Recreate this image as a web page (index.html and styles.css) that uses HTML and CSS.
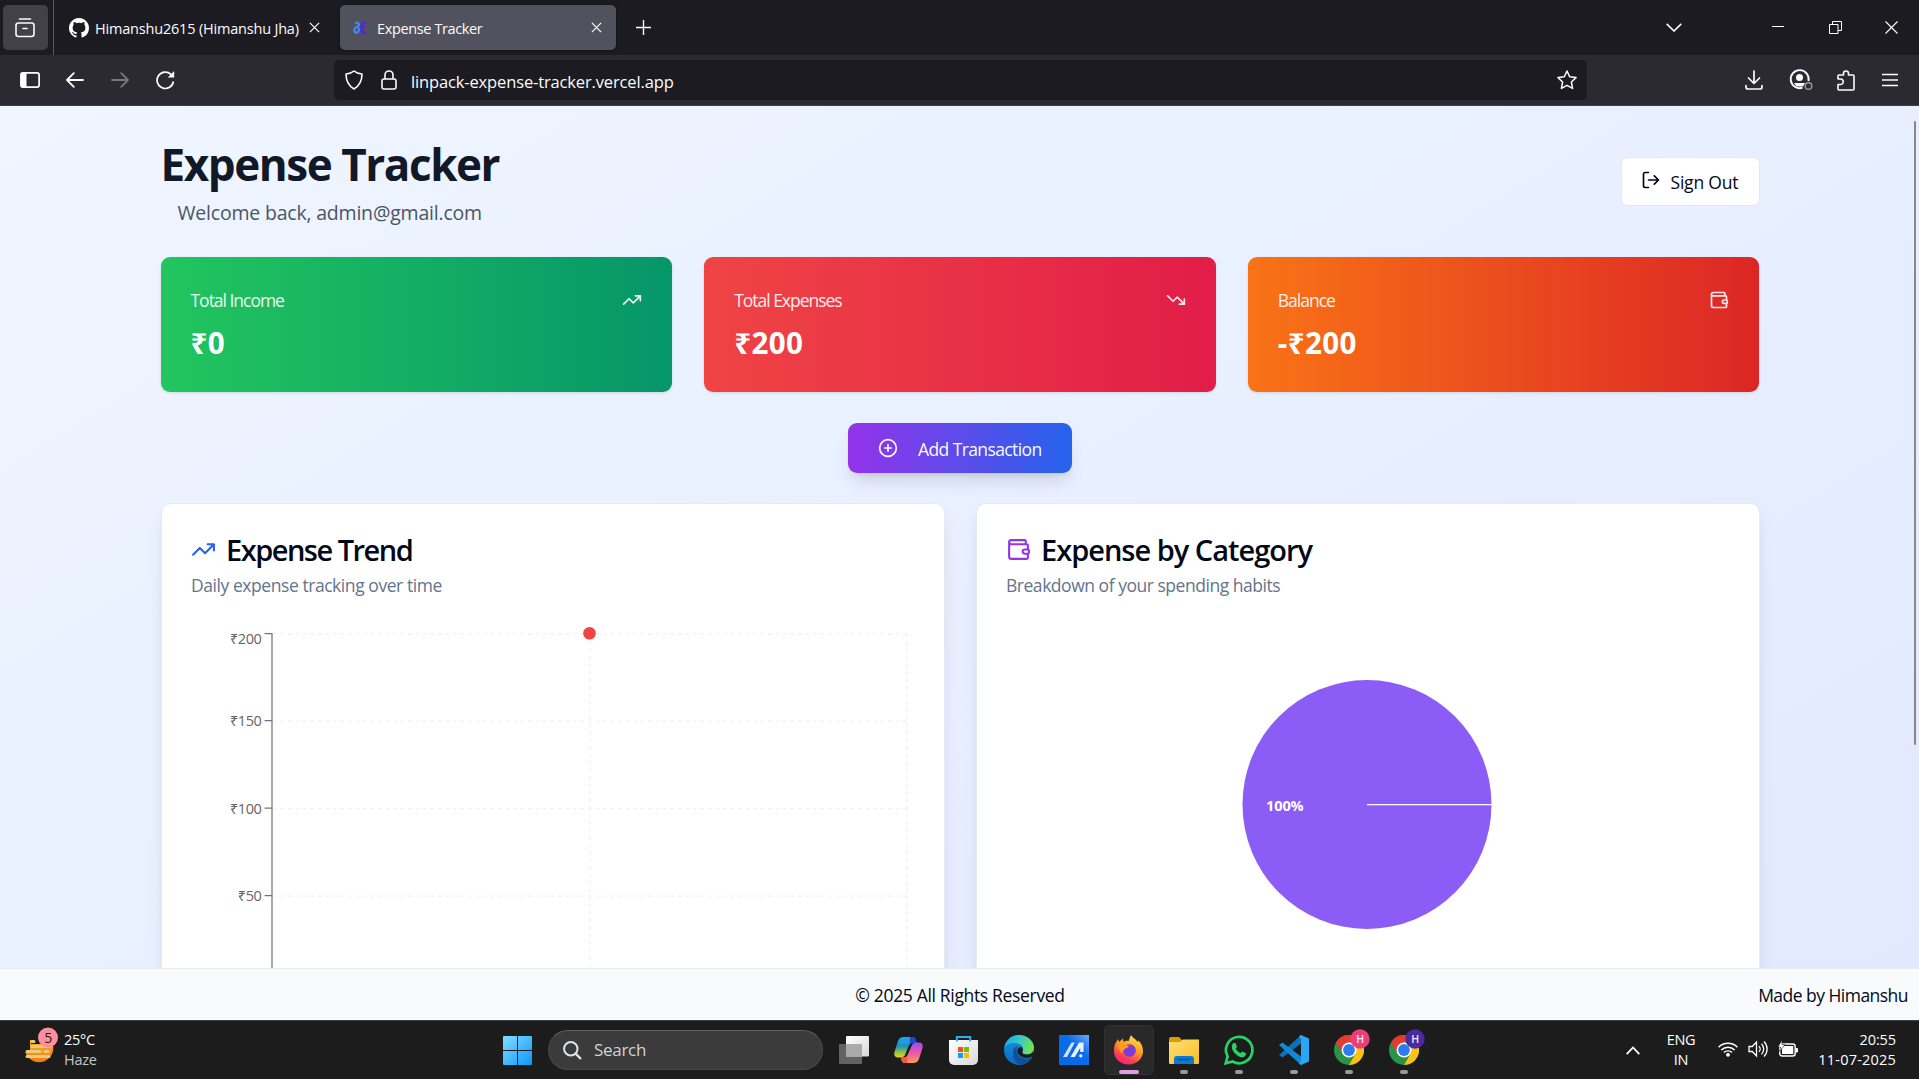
FILE: index.html
```html
<!DOCTYPE html>
<html lang="en">
<head>
<meta charset="utf-8">
<title>Expense Tracker</title>
<link rel="stylesheet" href="styles.css">
</head>
<body>
<svg class="defs" aria-hidden="true">
  <symbol id="close" viewBox="0 0 10 10"><path d="M.8.8l8.4 8.4M9.2.8L.8 9.2" fill="none" stroke="currentColor" stroke-width="1.1"/></symbol>
  <symbol id="trend-up" viewBox="0 0 24 24"><path d="M22 7l-8.5 8.5-5-5L2 17M16 7h6v6"/></symbol>
  <symbol id="trend-down" viewBox="0 0 24 24"><path d="M22 17l-8.5-8.5-5 5L2 7M16 17h6v-6"/></symbol>
  <symbol id="wallet" viewBox="0 0 24 24"><path d="M19 7V4a1 1 0 0 0-1-1H5a2 2 0 0 0 0 4h15a1 1 0 0 1 1 1v4h-3a2 2 0 0 0 0 4h3a1 1 0 0 0 1-1v-2a1 1 0 0 0-1-1M3 5v14a2 2 0 0 0 2 2h15a1 1 0 0 0 1-1v-4"/></symbol>
  <symbol id="chrome" viewBox="0 0 30 30">
    <circle cx="15" cy="15" r="15" fill="#2b9347"/>
    <path d="M15 7.5H28A15 15 0 0 0 2 7.5L8.500 18.750Z" fill="#e33b2e"/>
    <path d="M15 7.500H28A15 15 0 0 1 15 30L21.500 18.750Z" fill="#fbc116"/>
    <circle cx="15" cy="15" r="7.500" fill="#fff"/><circle cx="15" cy="15" r="5.900" fill="#2a7cf0"/>
  </symbol>
  <linearGradient id="g-win" x2="1" y2="1"><stop stop-color="#83ddff"/><stop offset="1" stop-color="#0c96fb"/></linearGradient>
  <linearGradient id="g-light" x2="1" y2="1"><stop stop-color="#fff"/><stop offset="1" stop-color="#d8d8d8"/></linearGradient>
  <linearGradient id="g-cop1" x2="0" y2="1"><stop stop-color="#1ba9f5"/><stop offset=".45" stop-color="#1f8fc0"/><stop offset=".75" stop-color="#8cc63f"/><stop offset="1" stop-color="#f8cb1c"/></linearGradient>
  <linearGradient id="g-cop2" x2="0" y2="1"><stop stop-color="#9a4df0"/><stop offset=".5" stop-color="#ea56a8"/><stop offset="1" stop-color="#ff9e50"/></linearGradient>
  <linearGradient id="g-edge" x2="1" y2=".3"><stop stop-color="#1b9fde"/><stop offset=".5" stop-color="#35c4cf"/><stop offset="1" stop-color="#6be25b"/></linearGradient>
  <linearGradient id="g-edge2" x2="0" y2="1"><stop stop-color="#1796df"/><stop offset="1" stop-color="#0b66c4"/></linearGradient>
  <linearGradient id="g-m" x1="0" y1="1" x2="1" y2="0"><stop stop-color="#0568e8"/><stop offset=".6" stop-color="#0a6cea"/><stop offset="1" stop-color="#6aa9fb"/></linearGradient>
  <linearGradient id="g-fox" x1=".8" y1="0" x2=".3" y2="1"><stop stop-color="#ffe94a"/><stop offset=".45" stop-color="#ff9a1f"/><stop offset=".8" stop-color="#fb3a55"/><stop offset="1" stop-color="#f5207c"/></linearGradient>
  <linearGradient id="g-folder" x2="1" y2="1"><stop stop-color="#ffe07a"/><stop offset="1" stop-color="#fcbc1d"/></linearGradient>
  <linearGradient id="g-sun" x2="0" y2="1"><stop stop-color="#fbc02d"/><stop offset="1" stop-color="#f07a13"/></linearGradient>
</svg>

<div class="tabstrip">
  <div class="view-button"><svg width="20" height="20" viewBox="0 0 20 20" fill="none" stroke="#fbfbfe" stroke-width="1.600" stroke-linecap="round"><path d="M4.500 1h11"/><rect x="1" y="5" width="18" height="13.500" rx="2.500"/><path d="M8 10.500h4"/></svg></div>
  <div class="tab tab-plain">
    <svg width="20" height="20" viewBox="0 0 16 16" fill="#fff"><path d="M8 0C3.580 0 0 3.580 0 8c0 3.540 2.290 6.530 5.470 7.590.4.070.55-.17.55-.38 0-.19-.01-.82-.01-1.490-2.010.37-2.530-.49-2.690-.94-.09-.23-.48-.94-.82-1.130-.28-.15-.68-.52-.01-.53.63-.01 1.080.58 1.230.82.72 1.210 1.870.87 2.330.66.07-.52.28-.87.51-1.070-1.780-.2-3.640-.89-3.640-3.950 0-.87.31-1.590.82-2.150-.08-.2-.36-1.020.08-2.120 0 0 .67-.21 2.200.82.64-.18 1.320-.27 2-.27s1.360.09 2 .27c1.530-1.040 2.200-.82 2.200-.82.44 1.100.16 1.920.08 2.120.51.56.82 1.270.82 2.150 0 3.070-1.870 3.750-3.650 3.950.29.25.54.73.54 1.480 0 1.070-.01 1.930-.01 2.200 0 .21.15.46.55.38A8.010 8.010 0 0 0 16 8c0-4.420-3.580-8-8-8z"/></svg>
    <span class="tab-title github-title">Himanshu2615 (Himanshu Jha)</span>
    <svg class="tab-close" width="11" height="11"><use href="#close"/></svg>
  </div>
  <div class="tab tab-active">
    <svg width="14" height="14" viewBox="0 0 14 14" fill="none" stroke-width="2.200"><path d="M2 2.200c3.500-1.700 5 1.500 2.800 4M5.500 6C1.500 5.500 0 10 2.500 11.500c2.500 1 3.800-2.500 3.800-4.500" stroke="#3d8bf2"/><path d="M12.800 1.500C9.500 1 8.800 4 8.500 7s1 5 4 5.500M8 7l4-1.500" stroke="#5420ee"/></svg>
    <span class="tab-title active-title">Expense Tracker</span>
    <svg class="tab-close" width="11" height="11"><use href="#close"/></svg>
  </div>
  <svg class="new-tab" width="15" height="15" viewBox="0 0 15 15" stroke="#fbfbfe" stroke-width="1.400"><path d="M7.500 0v15M0 7.500h15"/></svg>
  <div class="window-buttons">
    <svg width="16" height="9" viewBox="0 0 16 9" fill="none" stroke="#fbfbfe" stroke-width="1.600"><path d="M.7.900L8 8 15.300.900"/></svg>
    <svg width="12" height="13" viewBox="0 0 12 13" stroke="#fff"><path d="M0 5.500h12"/></svg>
    <svg width="13" height="13" viewBox="0 0 13 13" fill="none" stroke="#fff"><path d="M.5 3.500h8.500v9H.5zM3.500 3.500v-3h9V9.500H9"/></svg>
    <svg width="13" height="13" viewBox="0 0 13 13" stroke="#fff" stroke-width="1.100"><path d="M.5.5l12 12M12.500.5l-12 12"/></svg>
  </div>
</div>

<div class="toolbar">
  <div class="nav-icons">
    <svg width="20" height="16" viewBox="0 0 20 16"><rect x=".9" y=".9" width="18.200" height="14.200" rx="2" fill="none" stroke="#fff" stroke-width="1.700"/><path d="M1 1h5.500v14H1z" fill="#fff"/></svg>
    <svg width="18" height="16" viewBox="0 0 18 16" fill="none" stroke="#fbfbfe" stroke-width="1.800" stroke-linecap="round" stroke-linejoin="round"><path d="M17 8H1M7.800 1.200L1 8l6.800 6.800"/></svg>
    <svg width="18" height="16" viewBox="0 0 18 16" fill="none" stroke="#77767e" stroke-width="1.800" stroke-linecap="round" stroke-linejoin="round"><path d="M1 8h16M10.200 1.200L17 8l-6.800 6.800"/></svg>
    <svg width="19" height="20" viewBox="0 0 19 20" fill="none" stroke="#fbfbfe" stroke-width="1.700"><path d="M17.400 11.500A8.200 8.200 0 1 1 14.800 4.200L16.500 6"/><path d="M18.200 1v6.500h-6.500z" fill="#fbfbfe" stroke="none"/></svg>
  </div>
  <div class="urlbar">
    <svg width="18" height="20" viewBox="0 0 18 20" fill="none" stroke="#fbfbfe" stroke-width="1.600" stroke-linejoin="round"><path d="M9 1c2 1.800 4.800 2.700 8 3 0 7-2.600 11.800-8 15C3.600 15.800 1 11 1 4c3.200-.3 6-1.200 8-3z"/></svg>
    <svg width="16" height="20" viewBox="0 0 16 20" fill="none" stroke="#fbfbfe" stroke-width="1.600"><rect x="1" y="9" width="14" height="10" rx="2"/><path d="M4 9V5a4 4 0 0 1 8 0v4"/></svg>
    <span class="url">linpack-expense-tracker.vercel.app</span>
    <svg width="20" height="20" viewBox="0 0 20 20" fill="none" stroke="#fbfbfe" stroke-width="1.500" stroke-linejoin="round"><path d="M10 1l2.700 5.800 6.300.8-4.600 4.400 1.200 6.400L10 15.300l-5.600 3.100L5.600 12 1 7.600l6.300-.8z"/></svg>
  </div>
  <div class="tool-icons">
    <svg width="18" height="20" viewBox="0 0 18 20" fill="none" stroke="#fbfbfe" stroke-width="1.700" stroke-linecap="round" stroke-linejoin="round"><path d="M9 1v12M3.500 8L9 13.500 14.500 8M1 15.500V17a2 2 0 0 0 2 2h12a2 2 0 0 0 2-2v-1.500"/></svg>
    <svg width="24" height="22" viewBox="0 0 24 22"><path d="M13.500 18.700A9 9 0 1 1 19.500 12" fill="none" stroke="#fbfbfe" stroke-width="1.900"/><circle cx="10.500" cy="8.500" r="3.500" fill="#fbfbfe"/><path d="M5 14h11l-2 3.500H7.500z" fill="#fbfbfe"/><circle cx="19.500" cy="17" r="3.300" fill="none" stroke="#96959b" stroke-width="1.500"/></svg>
    <svg width="18" height="21" viewBox="0 0 18 21" fill="none" stroke="#fbfbfe" stroke-width="1.600" stroke-linejoin="round"><path d="M1 9V6a1 1 0 0 1 1-1h4.500V3.500a2.500 2.500 0 0 1 5 0V5H16a1 1 0 0 1 1 1v13a1 1 0 0 1-1 1H2a1 1 0 0 1-1-1v-4.500h2.500a2.500 2.500 0 0 0 0-5.500z"/></svg>
    <svg width="16" height="14" viewBox="0 0 16 14" stroke="#fbfbfe" stroke-width="1.500"><path d="M0 1.500h16M0 7h16M0 12.500h16"/></svg>
  </div>
</div>

<main class="viewport">
  <div class="container">
    <header class="page-header">
      <div>
        <h1 class="page-title">Expense Tracker</h1>
        <p class="welcome">Welcome back, admin@gmail.com</p>
      </div>
      <button class="sign-out">
        <svg class="lucide" width="20" height="20" viewBox="0 0 24 24"><path d="M9 21H5a2 2 0 0 1-2-2V5a2 2 0 0 1 2-2h4M16 17l5-5-5-5M21 12H9"/></svg>
        <span>Sign Out</span>
      </button>
    </header>

    <section class="stats">
      <article class="stat stat-income">
        <div class="stat-head"><span class="stat-label">Total Income</span><svg class="lucide" width="20" height="20"><use href="#trend-up"/></svg></div>
        <div class="stat-value">₹0</div>
      </article>
      <article class="stat stat-expense">
        <div class="stat-head"><span class="stat-label">Total Expenses</span><svg class="lucide" width="20" height="20"><use href="#trend-down"/></svg></div>
        <div class="stat-value">₹200</div>
      </article>
      <article class="stat stat-balance">
        <div class="stat-head"><span class="stat-label">Balance</span><svg class="lucide" width="20" height="20"><use href="#wallet"/></svg></div>
        <div class="stat-value">-₹200</div>
      </article>
    </section>

    <button class="add-button">
      <svg class="lucide" width="20" height="20" viewBox="0 0 24 24"><circle cx="12" cy="12" r="10"/><path d="M8 12h8M12 8v8"/></svg>
      <span>Add Transaction</span>
    </button>

    <section class="charts">
      <article class="panel">
        <h2 class="panel-title"><svg class="lucide blue" width="25" height="25"><use href="#trend-up"/></svg><span class="trend-name">Expense Trend</span></h2>
        <p class="panel-note trend-note">Daily expense tracking over time</p>
        <svg class="chart" width="722" height="400" viewBox="0 0 722 400">
          <g stroke="#f1f1f1" stroke-width="1.250" stroke-dasharray="3.750 3.750">
            <path d="M82 18.500h634M82 106h634M82 193.500h634M82 281h634M399 18.500v350M716 18.500v350"/>
          </g>
          <path d="M81 18v351M73.500 18.500h8M73.500 105.500h8M73.500 193h8M73.500 280.500h8" fill="none" stroke="#74767c" stroke-width="1.250"/>
          <g class="tick" text-anchor="end">
            <text x="70.500" y="29">₹200</text><text x="70.500" y="111">₹150</text><text x="70.500" y="198.500">₹100</text><text x="70.500" y="286">₹50</text>
          </g>
          <circle cx="398.500" cy="18.300" r="6.300" fill="#ef4444"/>
        </svg>
      </article>
      <article class="panel">
        <h2 class="panel-title"><svg class="lucide purple" width="25" height="25"><use href="#wallet"/></svg><span class="category-name">Expense by Category</span></h2>
        <p class="panel-note category-note">Breakdown of your spending habits</p>
        <svg class="chart" width="722" height="400" viewBox="0 0 722 400">
          <circle cx="361" cy="189.500" r="124.500" fill="#8b5cf6"/>
          <path d="M361 189.500h125" stroke="#fff" stroke-width="1.250"/>
          <text class="slice-label" x="260" y="196">100%</text>
        </svg>
      </article>
    </section>
  </div>
  <div class="scroll-thumb"></div>
</main>

<footer class="footer">
  <span></span>
  <span class="copyright">© 2025 All Rights Reserved</span>
  <span class="credit">Made by Himanshu</span>
</footer>

<div class="taskbar">
  <div class="weather">
    <svg width="36" height="38" viewBox="0 0 36 38"><circle cx="15" cy="21" r="14.300" fill="url(#g-sun)"/><path d="M0 0h17v13H0zM0 13h6v12H0z" fill="#1c1c1c"/><path d="M7 17h10v-5H7z" fill="#1c1c1c"/><path d="M8 14.500h2M8 19.500h18M3 24.500h13M21 24.500h3M3 29.500h22" stroke="#e8ca7c" stroke-width="3" stroke-linecap="round"/><circle cx="24" cy="10.500" r="10" fill="#ff8f9d"/><text class="weather-count" x="24" y="16" text-anchor="middle">5</text></svg>
    <div class="weather-text"><span>25°C</span><span class="dim">Haze</span></div>
  </div>
  <div class="apps">
    <div class="app"><svg width="29" height="29" viewBox="0 0 29 29" fill="url(#g-win)"><path d="M1 0h13v14H0V1a1 1 0 0 1 1-1zM15 0h13a1 1 0 0 1 1 1v13H15zM0 15h14v14H1a1 1 0 0 1-1-1zM15 15h14v13a1 1 0 0 1-1 1H15z"/></svg></div>
    <div class="search"><svg width="19" height="19" viewBox="0 0 19 19" fill="none" stroke="#dfe3e8" stroke-width="2"><circle cx="7.800" cy="7.800" r="6.700"/><path d="M12.600 12.600l5.400 5.400" stroke-width="2.400"/></svg><span>Search</span></div>
    <div class="app"><svg width="30" height="28" viewBox="0 0 30 28"><rect y="8" width="23" height="20" rx="1" fill="#626262"/><rect x="7" width="23" height="20.500" rx="1" fill="url(#g-light)"/><path d="M7 8h16v12.500H7z" fill="#aaa"/></svg></div>
    <div class="app"><svg width="29" height="26" viewBox="0 0 29 26"><path d="M10 0h8c2 0 3 1 3.500 3l.8 3h-4c-2 0-3 1-3.500 2.500L11 18c-.7 1.500-2 2.500-4 2.500H4C1 20.500-.5 18 .5 15L4 4c.8-2.500 3-4 6-4z" fill="url(#g-cop1)"/><path d="M16 0h3c1.500 0 2.500 1 3 3l.8 3h-4c-1.800 0-2.500.7-3 2z" fill="#1749d6"/><path d="M19 26h-8c-2 0-3-1-3.500-3l-.7-2.500H10c2 0 3-1 3.500-2.500L18 8c.7-1.500 2-2.500 4-2.500h3c3 0 4.500 2.500 3.500 5.500L25 22c-.8 2.500-3 4-6 4z" fill="url(#g-cop2)"/><path d="M13 26h-2c-2 0-3-1-3.500-3l-.7-2.500H10c2 0 3-1 3.500-2.500z" fill="#f25a3c"/></svg></div>
    <div class="app"><svg width="29" height="29" viewBox="0 0 29 29"><path d="M7.800 6V1h13.400v5" fill="none" stroke="#25b0ee" stroke-width="2"/><path d="M0 4h29v20a5 5 0 0 1-5 5H5a5 5 0 0 1-5-5z" fill="url(#g-light)"/><path d="M9 11h5v5H9z" fill="#f1511b"/><path d="M15 11h5v5h-5z" fill="#80bb03"/><path d="M9 17h5v5H9z" fill="#04a5f0"/><path d="M15 17h5v5h-5z" fill="#fdba05"/><path d="M7 4h1.800v1.500H7zM20.200 4H22v1.500h-1.800z" fill="#25b0ee"/></svg></div>
    <div class="app"><svg width="30" height="30" viewBox="0 0 30 30"><circle cx="15" cy="15" r="15" fill="url(#g-edge2)"/><path d="M0 14C1 6 7 0 15 0s15 6 15 12.500c0 4.500-3 7-7 7-3.500 0-5.300-1.300-4.500-3 2-4-1.500-8.500-7.500-8.500C5 8 1 10 0 14z" fill="url(#g-edge)"/><path d="M9 17c0-3 2-5.500 5-6-3 3-1.500 11 6 12.500 3 .6 6 0 8-1.200C25.500 27 21 30 16 30 12 28 9 23 9 17z" fill="#114f96"/><path d="M18.500 16.500c-.8 1.700 1 3 4.500 3 3 0 5.500-1.400 6.500-4L30 24l-2.200-2.200c-7 3-15-1-14.500-6.500.2-2 2-3.500 3.500-3.300 2 .4 2.500 2.500 1.700 4.500z" fill="#1c1c1c"/></svg></div>
    <div class="app"><svg width="30" height="30" viewBox="0 0 30 30"><path d="M0 0h30v30H0z" fill="url(#g-m)"/><path d="M4 22L12.500 7.500h3.300L8 22z" fill="#cfe2ff"/><path d="M11.500 22L20 7.500h4.500V17h-3.300v-4l-5.400 9z" fill="#e9f2ff"/><circle cx="21.800" cy="20.800" r="1.600" fill="#fff"/></svg></div>
    <div class="app app-current"><svg width="29" height="30" viewBox="0 0 29 30"><path d="M1 9l3-5 1 3 4-3.500.5 3.500c2-1.500 3.500-1.500 5-1L17 0c1.500 3 5 4 6.500 7l1-1.500c3 3 4.500 7 4.500 10.500C29 24 22.500 29.500 14.500 29.500S0 24 0 16c0-3 .3-5 1-7z" fill="url(#g-fox)"/><circle cx="15.500" cy="15.500" r="6.300" fill="#7a3bdf"/><path d="M4 10c4-2 7 0 11 1-1 2-3 2-5 3.500L8 18c-3-2-4-5-4-8z" fill="#ff9b22"/></svg><i></i></div>
    <div class="app"><svg width="30" height="27" viewBox="0 0 30 27"><path d="M0 2a2 2 0 0 1 2-2h8l3 3h15v6H0z" fill="#dd9b06"/><path d="M0 5h11l3-2.500h16V26a1 1 0 0 1-1 1H1a1 1 0 0 1-1-1z" fill="url(#g-folder)"/><path d="M5 27v-5a3 3 0 0 1 3-3h14a3 3 0 0 1 3 3v5z" fill="#0f78cf"/><path d="M9 22.500h12" stroke="#0a4b8f" stroke-width="1.200"/></svg><i></i></div>
    <div class="app"><svg width="30" height="30" viewBox="0 0 30 30"><path d="M1.700 28.300l1.900-6.900A13.200 13.200 0 1 1 8.600 26.500z" fill="none" stroke="#25d366" stroke-width="2.700"/><path d="M9.500 8h2l1.500 3.700-1.300 1.800c1 2 2.700 3.600 4.900 4.600l1.800-1.500 3.600 1.700c.3 2-1.500 4-4 4C13.500 22 8 16.500 7.800 12c0-2 .7-3.300 1.700-4z" fill="#25d366"/></svg><i></i></div>
    <div class="app"><svg width="30" height="30" viewBox="0 0 30 30"><path d="M22 8.500L3.500 22.500 0 20 22 0z" fill="#0872bd"/><path d="M0 10l3.500-2.500L22 21.500V30z" fill="#1089d6"/><path d="M22 0l8 3.500v23L22 30l-2-1.500 2-3V4.500l-2-3z" fill="#29a7f3"/></svg><i></i></div>
    <div class="app"><svg width="42" height="42" viewBox="-6 -6 42 42"><use href="#chrome" width="30" height="30"/><circle cx="26" cy="4" r="9.700" fill="#ec3f7a"/><text class="badge" x="26" y="8" text-anchor="middle">H</text></svg><i></i></div>
    <div class="app"><svg width="42" height="42" viewBox="-6 -6 42 42"><use href="#chrome" width="30" height="30"/><circle cx="26" cy="4" r="9.700" fill="#4a2aa3"/><text class="badge" x="26" y="8" text-anchor="middle">H</text></svg><i></i></div>
  </div>
  <div class="tray">
    <svg width="14" height="9" viewBox="0 0 14 9" fill="none" stroke="#fff" stroke-width="1.800"><path d="M.7 8.200L7 1.500l6.300 6.700"/></svg>
    <div class="lang"><span>ENG</span><span>IN</span></div>
    <div class="status">
      <svg width="20" height="16" viewBox="0 0 20 16" fill="none" stroke="#fff" stroke-width="1.400"><path d="M.6 6.200a13.300 13.300 0 0 1 18.800 0M3.300 9a9.500 9.500 0 0 1 13.400 0M5.900 11.600a5.800 5.800 0 0 1 8.200 0"/><circle cx="10" cy="13.800" r="1.900" fill="#fff" stroke="none"/></svg>
      <svg width="20" height="18" viewBox="0 0 20 18" fill="none" stroke="#fff" stroke-width="1.300"><path d="M1 6.500h3.200L8.500 2v14l-4.300-4.500H1zM11 6.200a4 4 0 0 1 0 5.600M13.500 3.800a7.300 7.300 0 0 1 0 10.400M16 1.500a10.600 10.600 0 0 1 0 15"/></svg>
      <svg width="20" height="18" viewBox="0 0 20 18"><rect x="1.700" y="4" width="15.500" height="12" rx="2.500" fill="none" stroke="#fff" stroke-width="1.400"/><path d="M4 6h11.300v8H4zM18 8h1a1 1 0 0 1 1 1v2.500a1 1 0 0 1-1 1h-1z" fill="#fff"/><path d="M4 0L0 7h2.500L1.500 11.500 7 4.500H4z" fill="#fff" stroke="#1c1c1c" stroke-width=".6"/></svg>
    </div>
    <div class="clock"><span>20:55</span><span class="date">11-07-2025</span></div>
  </div>
</div>
</body>
</html>
```
FILE: styles.css
```css
* { box-sizing: border-box; }

body {
  margin: 0;
  width: 1919px;
  height: 1079px;
  overflow: hidden;
  display: flex;
  flex-direction: column;
  font-family: "Open Sans", "Noto Sans", sans-serif;
  color: #020817;
}

h1, h2, p { margin: 0; }
svg { display: block; flex: none; }
span, text { white-space: nowrap; }
button { font: inherit; border: 0; padding: 0; color: inherit; }
.defs { position: absolute; width: 0; height: 0; }

.lucide {
  fill: none;
  stroke: currentColor;
  stroke-width: 2;
  stroke-linecap: round;
  stroke-linejoin: round;
}

/* Browser tabs */
.tabstrip {
  height: 55px;
  flex: none;
  display: flex;
  align-items: center;
  background: #1c1b22;
  color: #fbfbfe;
}
.view-button {
  width: 45px;
  height: 45px;
  margin-left: 3px;
  padding: 0 2px 0 0;
  border-radius: 5px;
  background: #42414a;
  display: grid;
  place-items: center;
}
.tab { display: flex; align-items: center; height: 45px; }
.tab-plain {
  width: 287px;
  height: 55px;
  margin-left: 5px;
  border-left: 1px solid #5b5a62;
  padding-left: 15px;
}
.tab-title { font-size: 14.500px; line-height: 20px; padding-top: 2px; }
.github-title { margin-left: 6px; width: 214px; letter-spacing: -0.190px; }
.tab-active {
  width: 276px;
  padding: 0 14px 0 13px;
  border-radius: 5px;
  background: #52525e;
  box-shadow: 0 0 3px rgba(0, 0, 0, .5);
}
.active-title { margin-left: 10px; flex: 1; letter-spacing: -0.370px; }
.new-tab { margin-left: 20px; }
.window-buttons { margin-left: auto; display: flex; align-items: center; padding-right: 21px; }
.window-buttons svg:nth-child(1) { margin-right: 90px; }
.window-buttons svg:nth-child(2) { margin-right: 45px; }
.window-buttons svg:nth-child(3) { margin-right: 43px; }

/* Browser toolbar */
.toolbar {
  height: 51px;
  flex: none;
  display: flex;
  align-items: center;
  background: #2b2a33;
  border-bottom: 1px solid #3f3e48;
  color: #fbfbfe;
}
.nav-icons { width: 334px; display: flex; align-items: center; padding-left: 20px; gap: 27px; }
.nav-icons svg:first-child { margin-right: -1px; }
.urlbar {
  width: 1253px;
  height: 40px;
  border-radius: 5px;
  background: #1c1b22;
  display: flex;
  align-items: center;
  padding: 0 10px 0 11px;
  gap: 18px;
}
.url { flex: 1; font-size: 16.500px; line-height: 24px; padding-top: 4px; margin-left: -4px; letter-spacing: -0.140px; }
.tool-icons { flex: 1; display: flex; align-items: center; justify-content: flex-end; padding-right: 21px; }
.tool-icons svg:nth-child(1) { margin-right: 26px; }
.tool-icons svg:nth-child(2) { margin-right: 23.500px; }
.tool-icons svg:nth-child(3) { margin-right: 27.500px; }

/* Page */
.viewport {
  position: relative;
  height: 862px;
  flex: none;
  overflow: hidden;
  background: linear-gradient(to bottom right, #eff6ff, #e0e7ff) 0 0 / 100% 1190px;
}
.container { width: 1599px; margin: 0 auto 0 160.500px; padding-top: 33px; }
.scroll-thumb {
  position: absolute;
  top: 15px;
  right: 3px;
  width: 2px;
  height: 624px;
  border-radius: 1px;
  background: #87888d;
}
.page-header { height: 118px; display: flex; justify-content: space-between; align-items: flex-start; }
.page-title { font-size: 44px; line-height: 50px; font-weight: 700; color: #111827; letter-spacing: -1.430px; }
.welcome { margin: 9px 0 0 17px; font-size: 19.500px; line-height: 30px; color: #4b5563; letter-spacing: -0.200px; }
.sign-out {
  width: 139px;
  height: 49px;
  margin-top: 17.500px;
  border: 1px solid #e2e8f0;
  border-radius: 7px;
  background: #fff;
  display: flex;
  align-items: center;
  padding-left: 19px;
  padding-top: 1px;
  gap: 10px;
  font-size: 17.500px;
  letter-spacing: -0.200px;
}
.sign-out svg { margin-top: -3px; }

.stats { display: grid; grid-template-columns: repeat(3, 1fr); gap: 32px; }
.stat {
  height: 135px;
  padding: 29px 30px 0;
  border-radius: 9px;
  color: #fff;
  box-shadow: 0 1px 3px rgba(0, 0, 0, .12);
}
.stat-income { background: linear-gradient(to right, #22c55e, #059669); }
.stat-expense { background: linear-gradient(to right, #ef4444, #e11d48); }
.stat-balance { background: linear-gradient(to right, #f97316, #dc2626); }
.stat-head { display: flex; justify-content: space-between; align-items: center; opacity: .9; }
.stat-label { font-size: 17.500px; line-height: 28px; letter-spacing: -1.020px; }
.stat-value { margin-top: 11px; font-size: 29.500px; line-height: 36px; font-weight: 700; letter-spacing: 0.400px; }

.add-button {
  width: 224px;
  height: 50px;
  margin: 31px auto 30px;
  border-radius: 9px;
  background: linear-gradient(to right, #9333ea, #2563eb);
  box-shadow: 0 12px 18px -4px rgba(0, 0, 0, .12), 0 5px 7px -5px rgba(0, 0, 0, .12);
  color: #f8fafc;
  display: flex;
  align-items: center;
  padding-left: 30px;
  gap: 20px;
  font-size: 17.500px;
  letter-spacing: -0.600px;
}
.add-button span { padding-top: 2px; }

.charts { display: grid; grid-template-columns: 1fr 1fr; gap: 31px; }
.panel {
  height: 560px;
  padding: 28px 29px 0 29.500px;
  border: 1px solid #e5eaf3;
  border-radius: 10px;
  background: #fff;
  box-shadow: 0 12px 19px -4px rgba(0, 0, 0, .1), 0 5px 8px -5px rgba(0, 0, 0, .1);
}
.panel-title { display: flex; align-items: center; gap: 10px; font-size: 29px; line-height: 36px; font-weight: 600; }
.panel-title svg { margin-top: -1px; }
.panel-note { margin-top: 3px; font-size: 17.500px; line-height: 28px; color: #64748b; }
.trend-name { letter-spacing: -1.500px; }
.category-name { letter-spacing: -1px; }
.trend-note { letter-spacing: -0.440px; }
.category-note { letter-spacing: -0.470px; }
.blue { color: #2563eb; }
.purple { color: #9333ea; }
.chart { margin-top: 16px; }
.tick { font-size: 14.500px; fill: #666; letter-spacing: -0.400px; }
.slice-label { font-size: 14.500px; font-weight: 700; fill: #fff; letter-spacing: -0.100px; }

.footer {
  height: 52px;
  flex: none;
  display: grid;
  grid-template-columns: 1fr auto 1fr;
  align-items: center;
  border-top: 1px solid #ebebec;
  background: #f8fafc;
  padding: 1px 11px 0 12px;
  font-size: 17.500px;
  line-height: 26px;
}
.copyright { letter-spacing: -0.330px; }
.credit { text-align: right; letter-spacing: -0.530px; }

/* Windows taskbar */
.taskbar {
  height: 59px;
  flex: none;
  display: flex;
  background: #1c1c1c;
  border-top: 1px solid #3d3d3d;
  color: #fff;
  font-size: 14.500px;
  line-height: 20px;
  letter-spacing: -0.300px;
}
.weather { width: 490px; display: flex; padding: 6px 0 0 24px; gap: 4px; }
.weather-text { display: flex; flex-direction: column; padding-top: 3px; }
.weather-count { font-size: 14px; fill: #2a1a1c; }
.dim { color: #c6c6c6; }
.apps { display: flex; align-items: center; }
.app { position: relative; width: 55px; height: 50px; display: grid; place-items: center; }
.app-current { width: 50px; margin: 0 2.500px; border-radius: 5px; background: #292929; border: 1px solid #323232; }
.app i {
  position: absolute;
  bottom: 1px;
  left: calc(50% - 4px);
  width: 8px;
  height: 4px;
  border-radius: 2px;
  background: #999;
}
.app-current i { left: calc(50% - 10px); bottom: 0; width: 20px; background: #dc9fe0; }
.badge { font-size: 10.500px; font-weight: 600; fill: #f3e6f2; }
.search {
  width: 275px;
  height: 40px;
  margin: 0 3px;
  border-radius: 20px;
  border: 1px solid #4a4a4a;
  border-top-color: #606060;
  background: #3b3b3b;
  display: flex;
  align-items: center;
  padding-left: 14px;
  gap: 12px;
  font-size: 17px;
  letter-spacing: -0.300px;
  color: #d2d2d2;
}
.tray { margin-left: auto; display: flex; align-items: center; padding-right: 23px; }
.lang { width: 40px; margin-left: 21px; display: flex; flex-direction: column; align-items: center; }
.status { display: flex; align-items: center; gap: 10px; margin-left: 17px; padding-bottom: 2px; }
.clock { width: 98px; display: flex; flex-direction: column; align-items: flex-end; letter-spacing: -0.100px; }
.date { letter-spacing: 0.200px; }
```
